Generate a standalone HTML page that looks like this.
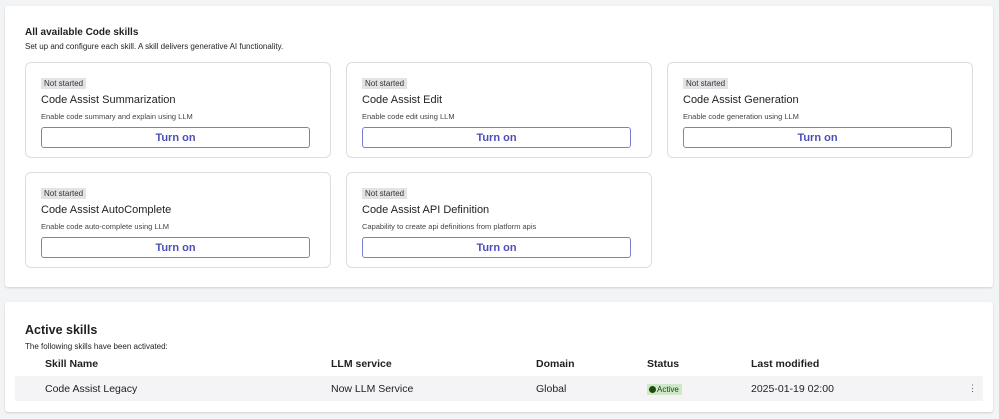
<!DOCTYPE html><html><head><style>
body{margin:0;width:999px;height:419px;background:#f3f4f6;font-family:"Liberation Sans",sans-serif;color:#1f1f24;position:relative;overflow:hidden}
.p{position:absolute;left:5px;width:988px;background:#fff;border-radius:3px;box-shadow:0 1px 2px rgba(0,0,0,.15)}
.a{position:absolute;white-space:nowrap}
.c{position:absolute;width:304px;height:94px;border:1px solid #dcdde0;border-radius:6px;background:#fff}
.b{position:absolute;left:15px;top:15px;background:#e3e3e6;font-size:8px;padding:1px 3px;color:#333}
.t{position:absolute;left:15px;top:31px;font-size:11px}
.d{position:absolute;left:15px;top:49px;font-size:7.5px;color:#444}
.btn{position:absolute;left:15px;top:64px;width:267px;height:19px;border:1px solid #7b7fd4;border-radius:3px;color:#4a4fb8;font-size:11px;font-weight:bold;text-align:center;line-height:20px}
.h{font-size:10.5px;font-weight:bold;top:358px}
.r{font-size:10.5px;top:383px}
</style></head><body>
<div class="p" style="top:6px;height:281px"></div>
<div class="p" style="top:302px;height:110px"></div>
<div class="a" style="left:25px;top:27px;font-size:10px;font-weight:bold">All available Code skills</div>
<div class="a" style="left:25px;top:42px;font-size:8px">Set up and configure each skill. A skill delivers generative AI functionality.</div>
<div class="c" style="left:25px;top:62px"><div class="b">Not started</div><div class="t">Code Assist Summarization</div><div class="d">Enable code summary and explain using LLM</div><div class="btn">Turn on</div></div>
<div class="c" style="left:346px;top:62px"><div class="b">Not started</div><div class="t">Code Assist Edit</div><div class="d">Enable code edit using LLM</div><div class="btn">Turn on</div></div>
<div class="c" style="left:667px;top:62px"><div class="b">Not started</div><div class="t">Code Assist Generation</div><div class="d">Enable code generation using LLM</div><div class="btn">Turn on</div></div>
<div class="c" style="left:25px;top:172px"><div class="b">Not started</div><div class="t">Code Assist AutoComplete</div><div class="d">Enable code auto-complete using LLM</div><div class="btn">Turn on</div></div>
<div class="c" style="left:346px;top:172px"><div class="b">Not started</div><div class="t">Code Assist API Definition</div><div class="d">Capability to create api definitions from platform apis</div><div class="btn">Turn on</div></div>
<div class="a" style="left:25px;top:323px;font-size:12.5px;font-weight:bold">Active skills</div>
<div class="a" style="left:25px;top:342px;font-size:8px">The following skills have been activated:</div>
<div class="a h" style="left:45px">Skill Name</div><div class="a h" style="left:331px">LLM service</div><div class="a h" style="left:536px">Domain</div><div class="a h" style="left:647px">Status</div><div class="a h" style="left:751px">Last modified</div>
<div class="a" style="left:15px;top:376px;width:968px;height:25px;background:#f4f4f6"></div>
<div class="a r" style="left:45px">Code Assist Legacy</div><div class="a r" style="left:331px">Now LLM Service</div><div class="a r" style="left:536px">Global</div>
<div class="a" style="left:647px;top:384px;background:#cfe8c8;font-size:8px;padding:1px 3px 1px 2px;color:#1f3a1a"><span style="display:inline-block;width:7px;height:7px;border-radius:50%;background:#1e4d14;vertical-align:-1px;margin-right:1px"></span>Active</div>
<div class="a r" style="left:751px">2025-01-19 02:00</div>
<div class="a" style="left:968px;top:383px;font-size:9px;color:#555">⋮</div>
</body></html>
